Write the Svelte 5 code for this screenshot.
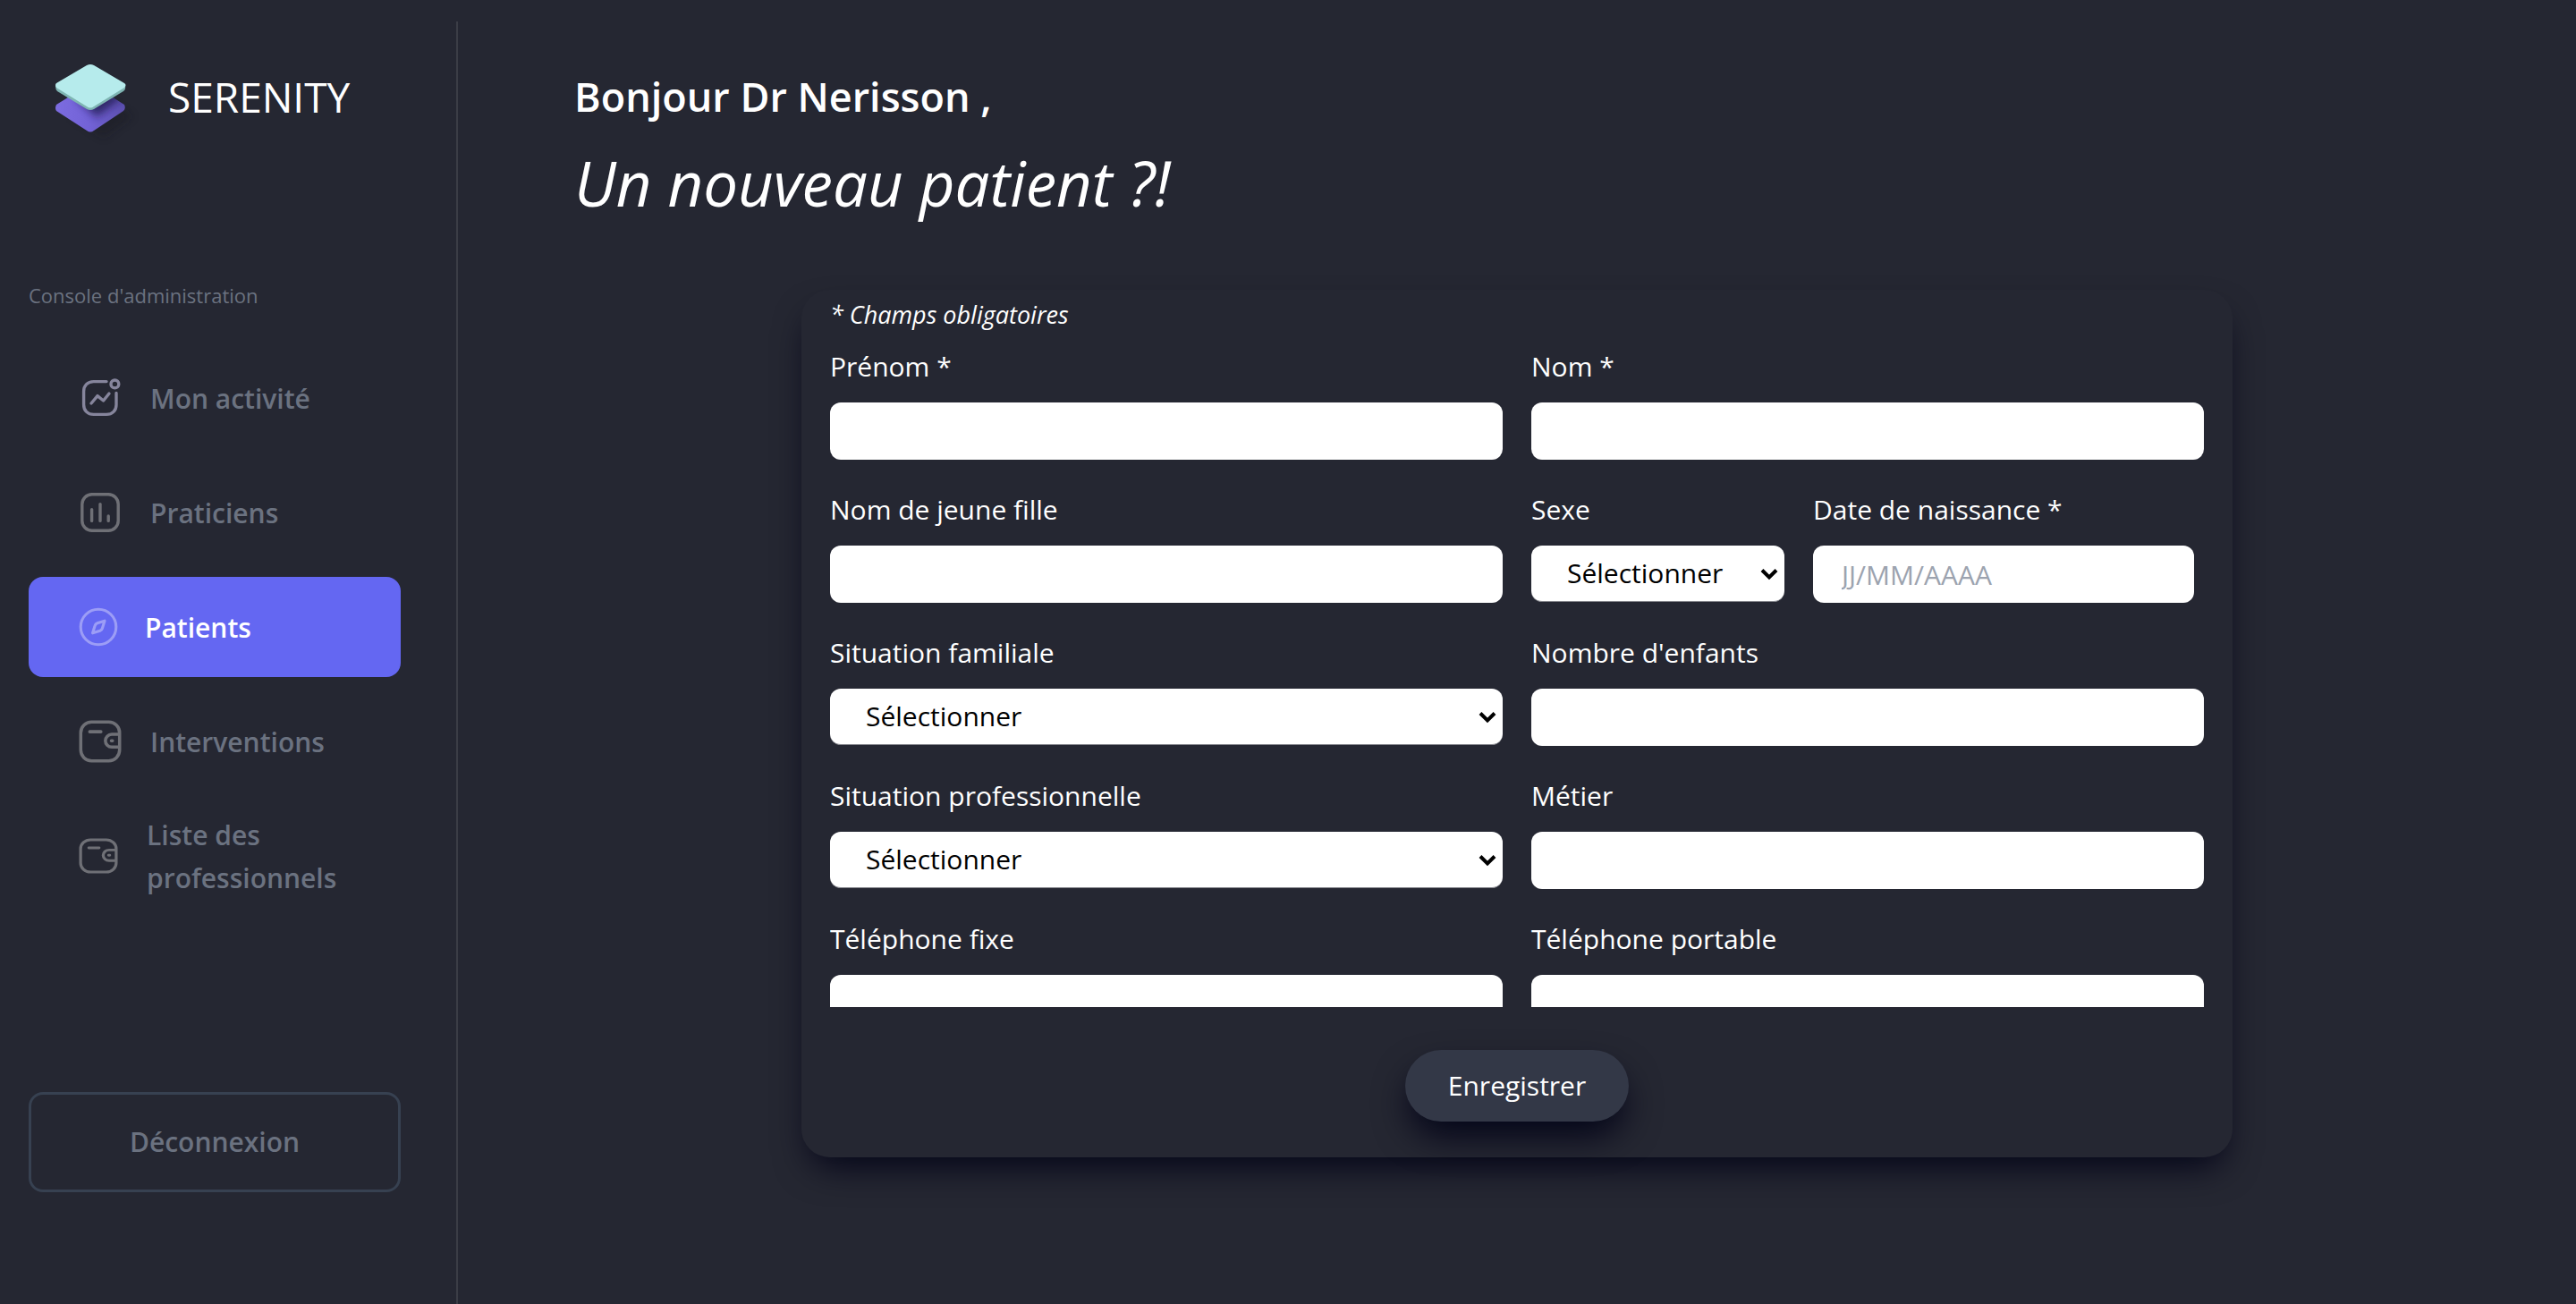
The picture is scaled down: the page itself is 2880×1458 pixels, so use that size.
<script>
  const menu = [
    { icon: 'activity', label: 'Mon activité' },
    { icon: 'chart', label: 'Praticiens' },
    { icon: 'compass', label: 'Patients', active: true },
    { icon: 'wallet', label: 'Interventions' },
    { icon: 'wallet', label: 'Liste des professionnels', compact: true }
  ];
</script>

{#snippet textField(id, label, placeholder = '')}
  <div class="field">
    <label for={id}>{label}</label>
    <input {id} type="text" {placeholder} />
  </div>
{/snippet}

{#snippet selectField(id, label)}
  <div class="field">
    <label for={id}>{label}</label>
    <div class="select">
      <select {id}><option>Sélectionner</option></select>
      <svg viewBox="0 0 20 14" aria-hidden="true"><path d="M2 2.500 10 10.500 18 2.500" /></svg>
    </div>
  </div>
{/snippet}

<div class="app">
  <aside>
    <div class="brand">
      <svg class="logo" viewBox="0 0 110 110" aria-hidden="true">
        <defs>
          <filter id="soft" x="-40%" y="-40%" width="180%" height="180%"><feGaussianBlur stdDeviation="5" /></filter>
          <linearGradient id="low" x1="0" y1="0" x2="1" y2="0">
            <stop offset="0" stop-color="#7c6ce0" /><stop offset="0.5" stop-color="#7262d6" /><stop offset="1" stop-color="#5d50b0" />
          </linearGradient>
          <clipPath id="lowclip"><path d="M13 57 47 36Q51 34 55 36L89 57Q91 61 88 64L55 86Q51 89 47 86L13 64Q11 61 13 57Z" /></clipPath>
        </defs>
        <path d="M30 70 64 48 98 70 66 94Z" fill="#17181f" opacity="0.35" filter="url(#soft)" />
        <path d="M13 57 47 36Q51 34 55 36L89 57Q91 61 88 64L55 86Q51 89 47 86L13 64Q11 61 13 57Z" fill="url(#low)" />
        <g clip-path="url(#lowclip)"><path d="M36 50 60 34 88 48 58 71Z" fill="#1d1748" opacity="0.75" filter="url(#soft)" /></g>
        <path d="M12 36Q12 40 14 42L47 62Q51 64 55 62L88 42Q91 40 90 35L51 20Z" fill="#7fb5b3" />
        <path d="M13 33 47 13Q51 11 55 13L89 33Q92 35 89 38L55 59Q51 62 47 59L13 38Q11 35 13 33Z" fill="#b6ebec" />
      </svg>
      <span>SERENITY</span>
    </div>
    <p class="section">Console d'administration</p>
    <nav>
      {#each menu as item}
        <a href="#menu" class:active={item.active} class:compact={item.compact}>
          {#if item.icon === 'activity'}
            <svg class="activity" viewBox="0 0 24 24" aria-hidden="true"><path d="M15.500 2.800H8.300C5 2.800 2.800 5 2.800 8.300V15.700C2.800 19 5 21.200 8.300 21.200H15.500C18.800 21.200 21 19 21 15.700V9.200M7 15 10.500 10.800 13.800 13.500 17 9.500" /><circle cx="20.200" cy="4.200" r="2.200" /></svg>
          {:else if item.icon === 'chart'}
            <svg viewBox="0 0 24 24" aria-hidden="true"><rect x="1.900" y="1.900" width="20.200" height="20.200" rx="5.500" /><path d="M7.300 10.300V16.700M12 7.300V16.700M16.600 14V16.700" /></svg>
          {:else if item.icon === 'compass'}
            <svg viewBox="0 0 24 24" aria-hidden="true"><circle cx="12" cy="12" r="10.800" /><path d="M15.800 8.300 14.400 12.800Q14.100 13.900 13 14.300L8.500 15.700 9.900 11.200Q10.200 10.100 11.300 9.700Z" /></svg>
          {:else}
            <svg class="wallet" viewBox="0.500 0.500 23 23" preserveAspectRatio="none" aria-hidden="true"><rect x="1.600" y="1.600" width="20.800" height="20.800" rx="5.800" /><path d="M6.400 6.800H12.400M22 8.200H18.200A3.300 3.300 0 0 0 18.200 15H22M18 11.600H18.600" /></svg>
          {/if}
          <span>{item.label}</span>
        </a>
      {/each}
    </nav>
    <button type="button" class="logout">Déconnexion</button>
  </aside>

  <main>
    <h1>Bonjour Dr Nerisson ,</h1>
    <h2>Un nouveau patient ?!</h2>
    <form>
      <div class="scroll">
        <p class="required">* Champs obligatoires</p>
        <div class="grid">
          {@render textField('prenom', 'Prénom *')}
          {@render textField('nom', 'Nom *')}
          {@render textField('jeune-fille', 'Nom de jeune fille')}
          <div class="pair">
            {@render selectField('sexe', 'Sexe')}
            {@render textField('naissance', 'Date de naissance *', 'JJ/MM/AAAA')}
          </div>
          {@render selectField('famille', 'Situation familiale')}
          {@render textField('enfants', "Nombre d'enfants")}
          {@render selectField('profession', 'Situation professionnelle')}
          {@render textField('metier', 'Métier')}
          {@render textField('fixe', 'Téléphone fixe')}
          {@render textField('portable', 'Téléphone portable')}
        </div>
      </div>
      <button type="button" class="save">Enregistrer</button>
    </form>
  </main>
</div>

<style>
  :global(body) {
    margin: 0;
    background: #252732;
  }
  .app,
  .app * {
    box-sizing: border-box;
  }
  .app {
    display: flex;
    min-height: 100vh;
    padding-top: 24px;
    background: #252732;
    color: #fff;
    font-family: 'Segoe UI', 'Open Sans', 'Noto Sans', sans-serif;
    font-size: 30px;
    line-height: 48px;
  }
  input,
  select,
  button {
    font: inherit;
  }
  p,
  h1,
  h2 {
    margin: 0;
  }
  aside {
    display: flex;
    flex: none;
    flex-direction: column;
    width: 512px;
    padding: 36px 62px 125px 32px;
    border-right: 2px solid #3b3d46;
    color: #6b7280;
  }
  .brand {
    display: flex;
    gap: 28px;
    height: 110px;
    padding-left: 18px;
    color: #fff;
    font-size: 46px;
    line-height: 96px;
  }
  .logo {
    width: 110px;
    height: 110px;
  }
  .section {
    margin-top: 136px;
    font-size: 22px;
  }
  nav {
    display: flex;
    flex-direction: column;
    gap: 16px;
    margin-top: 35px;
  }
  nav a {
    display: flex;
    align-items: center;
    gap: 32px;
    height: 112px;
    padding: 0 40px 0 56px;
    border-radius: 16px;
    color: inherit;
    font-weight: 600;
    text-decoration: none;
  }
  nav svg {
    flex: none;
    width: 48px;
    height: 48px;
    fill: none;
    stroke: #6f7076;
    stroke-width: 1.7;
    stroke-linecap: round;
    stroke-linejoin: round;
  }
  nav span {
    padding-top: 2px;
  }
  nav .activity {
    stroke: #86859c;
  }
  nav .active {
    gap: 30px;
    background: #6467f2;
    color: #fff;
  }
  nav .active svg {
    width: 44px;
    height: 44px;
    stroke: #9c9df6;
  }
  nav .compact svg {
    width: 44px;
    height: 40px;
  }
  .logout {
    width: 100%;
    height: 112px;
    margin-top: auto;
    border: 3px solid #374151;
    border-radius: 16px;
    background: none;
    color: inherit;
    font-weight: 600;
  }
  main {
    flex: 1;
    min-width: 0;
    padding: 48px 128px 0;
  }
  h1 {
    padding-left: 2px;
    font-size: 45px;
    font-weight: 600;
    line-height: 72px;
  }
  h2 {
    padding-left: 2px;
    font-size: 69px;
    font-style: italic;
    font-weight: 400;
    line-height: 120px;
  }
  form {
    max-width: 1600px;
    margin: 60px auto 0;
    padding: 0 32px 40px;
    border-radius: 32px;
    box-shadow: 0 20px 40px -12px #000216;
    text-align: center;
  }
  .scroll {
    height: 55vh;
    padding-top: 4px;
    overflow: hidden;
    text-align: left;
  }
  .required {
    margin-bottom: 10px;
    font-size: 27px;
    font-style: italic;
  }
  .grid {
    display: grid;
    grid-template-columns: 1fr 1fr;
    gap: 32px;
  }
  .pair {
    display: grid;
    grid-template-columns: 283fr 426fr;
    gap: 32px;
    padding-right: 11px;
  }
  label {
    display: block;
    height: 64px;
  }
  input,
  select {
    display: block;
    width: 100%;
    height: 64px;
    border: 0;
    border-radius: 12px;
    background: #fff;
    color: #000;
    padding: 0 32px;
  }
  input::placeholder {
    color: #9ca3af;
  }
  .select {
    position: relative;
  }
  select {
    height: 63px;
    padding: 0 40px;
    border-bottom: 1px solid #85868c;
    appearance: none;
  }
  .select svg {
    position: absolute;
    top: 25px;
    right: 7px;
    width: 20px;
    height: 14px;
    fill: none;
    stroke: #000;
    stroke-width: 4;
  }
  .save {
    height: 80px;
    margin-top: 48px;
    padding: 0 48px;
    border: 0;
    border-radius: 40px;
    background: #333847;
    box-shadow: 0 20px 40px -6px #000216;
    color: #fff;
  }
</style>
